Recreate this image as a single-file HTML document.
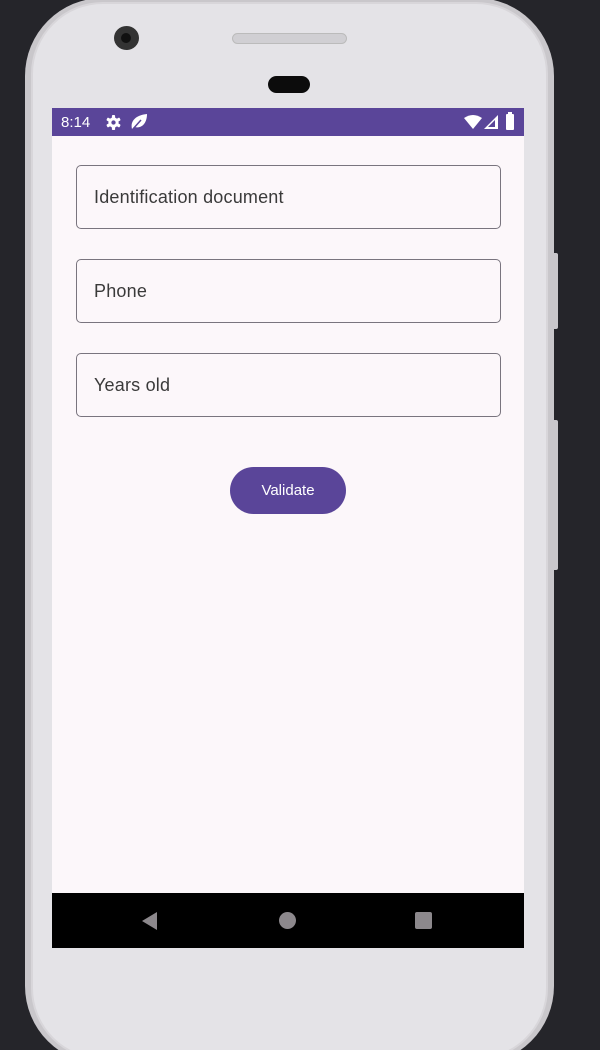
<!DOCTYPE html>
<html style="width:600px;height:1050px;overflow:hidden"><head><style>
*{margin:0;padding:0;box-sizing:border-box}
body{width:600px;height:1050px;background:#25252a;position:relative;overflow:hidden;font-family:"Liberation Sans",Roboto,sans-serif}
.phone{position:absolute;left:25px;top:-2px;width:529px;height:1066px;border-radius:78px;background:#c9c7cb;}
.inner{position:absolute;left:6px;top:4px;right:6px;bottom:4px;border-radius:72px;background:#e4e3e7;border:2px solid #d8d6da}
.btn{position:absolute;left:553px;width:5px;background:#c9c7cb;border-radius:0 2px 2px 0}
.screen{position:absolute;left:52px;top:108px;width:472px;height:840px;background:#fcf7fa}
.status{position:absolute;left:0;top:0;width:472px;height:28px;background:#5a4599;color:#fff;font-size:15px}
.field{position:absolute;left:24px;width:425px;height:64px;border:1.5px solid #79747e;border-radius:5px;font-size:18px;color:#3a3a3a;padding-left:17px;line-height:63px;letter-spacing:.2px}
.vbtn{position:absolute;left:178px;top:359px;width:116px;height:47px;border-radius:24px;background:#5a4599;color:#fff;font-size:15px;text-align:center;line-height:47px}
.nav{position:absolute;left:0;top:785px;width:472px;height:55px;background:#000}
</style></head><body>
<div class="phone"><div class="inner"></div></div>
<div class="btn" style="top:253px;height:76px"></div>
<div class="btn" style="top:420px;height:150px"></div>
<div style="position:absolute;left:114px;top:26px;width:25px;height:24px;border-radius:50%;background:#333"></div>
<div style="position:absolute;left:121px;top:33px;width:10px;height:10px;border-radius:50%;background:#111"></div>
<div style="position:absolute;left:232px;top:33px;width:115px;height:11px;border-radius:6px;background:#d0cfd3;border:1px solid #bbb"></div>
<div style="position:absolute;left:268px;top:76px;width:42px;height:17px;border-radius:9px;background:#0c0c0c"></div>
<div class="screen">
 <div class="status">
  <span style="position:absolute;left:9px;top:6px">8:14</span>
  <svg style="position:absolute;left:54px;top:7px" width="15" height="15" viewBox="0 0 16 16"><g fill="#fff"><circle cx="8" cy="8" r="5.5"/><rect x="6.3" y="0" width="3.4" height="16" rx="1"/><rect x="6.3" y="0" width="3.4" height="16" rx="1" transform="rotate(60 8 8)"/><rect x="6.3" y="0" width="3.4" height="16" rx="1" transform="rotate(120 8 8)"/></g><circle cx="8" cy="8" r="2.3" fill="#5a4599"/></svg>
  <svg style="position:absolute;left:78px;top:5px" width="18" height="18" viewBox="0 0 18 18"><path d="M2 16 C0 8 6 2 17 1 C17 10 12 16 4 14 Z" fill="#fff"/><path d="M3 16 L11 7" stroke="#5a4599" stroke-width="1.5"/></svg>
  <svg style="position:absolute;left:412px;top:7px" width="18" height="14" viewBox="0 0 18 14"><path d="M0 3 Q9 -3 18 3 L9 14 Z" fill="#fff"/></svg>
  <svg style="position:absolute;left:432px;top:7px" width="14" height="14" viewBox="0 0 14 14"><path d="M14 0 L14 14 L0 14 Z" fill="#fff"/><path d="M11 5 L11 12 L4 12 Z" fill="#5a4599"/></svg>
  <div style="position:absolute;left:454px;top:6px;width:8px;height:16px;background:#fff;border-radius:1px"></div>
  <div style="position:absolute;left:456px;top:4px;width:4px;height:3px;background:#fff"></div>
 </div>
 <div class="field" style="top:57px">Identification document</div>
 <div class="field" style="top:151px">Phone</div>
 <div class="field" style="top:245px">Years old</div>
 <div class="vbtn">Validate</div>
 <div class="nav">
  <svg style="position:absolute;left:90px;top:19px" width="16" height="18"><path d="M0 9 L15 0 L15 18 Z" fill="#8c888c"/></svg>
  <div style="position:absolute;left:227px;top:19px;width:17px;height:17px;border-radius:50%;background:#8c888c"></div>
  <div style="position:absolute;left:363px;top:19px;width:17px;height:17px;border-radius:2px;background:#8c888c"></div>
 </div>
</div>
</body></html>
